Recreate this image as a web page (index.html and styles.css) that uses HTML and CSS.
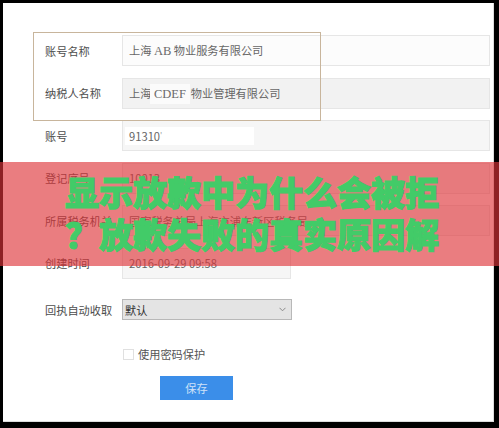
FILE: index.html
```html
<!DOCTYPE html>
<html lang="zh-CN">
<head>
<meta charset="utf-8">
<title>账号设置</title>
<link rel="stylesheet" href="styles.css">
</head>
<body>
<div class="frame">
  <div class="form">
    <div class="row">
      <div class="label">账号名称</div>
      <div class="field f-white"><span class="val">上海&nbsp;<span class="latin">AB</span>&nbsp;物业服务有限公司</span></div>
    </div>
    <div class="row">
      <div class="label">纳税人名称</div>
      <div class="field f-gray"><span class="val">上海&nbsp;<span class="latin patch">CDEF</span>&nbsp;&nbsp;物业管理有限公司</span></div>
    </div>
    <div class="row">
      <div class="label">账号</div>
      <div class="field f-light"><span class="val redact">91310<span class="tick">'</span></span></div>
    </div>
    <div class="row">
      <div class="label">登记序号</div>
      <div class="field f-light"><span class="val">10013</span></div>
    </div>
    <div class="row">
      <div class="label">所属税务机关</div>
      <div class="field f-light"><span class="val">国家税务总局上海市浦东新区税务局</span></div>
    </div>
    <div class="row">
      <div class="label">创建时间</div>
      <div class="field f-light short"><span class="val">2016-09-29 09:58</span></div>
    </div>
    <div class="row row-select">
      <div class="label">回执自动收取</div>
      <div class="select">
        <span class="sel-val">默认</span>
        <svg class="chev" width="7" height="5" viewBox="0 0 7 5"><path d="M0.5 0.8 L3.5 3.8 L6.5 0.8" fill="none" stroke="#8a8a8a" stroke-width="1"/></svg>
      </div>
    </div>
    <div class="row-check">
      <span class="checkbox"></span>
      <span class="check-text">使用密码保护</span>
    </div>
    <div class="row-btn">
      <button class="btn">保存</button>
    </div>
  </div>
  <div class="highlight"></div>
</div>
<div class="banner">
  <div class="title-line">显示放款中为什么会被拒</div>
  <div class="title-line">？放款失败的真实原因解</div>
</div>
</body>
</html>
```

FILE: styles.css
```css
html, body {
  margin: 0;
  padding: 0;
}
body {
  background: #000;
  width: 499px;
  height: 428px;
  overflow: hidden;
  position: relative;
  font-family: "Noto Sans CJK SC", "Noto Sans", sans-serif;
}
.frame {
  position: relative;
  margin: 3px 5px 0 3px;
  height: 419px;
  background: #fff;
  box-shadow: inset -1px -1px 0 #dcdcdc;
}
.form {
  display: flex;
  flex-direction: column;
  padding: 32px 4px 0 42px;
}
.row {
  display: flex;
  align-items: center;
  height: 31px;
  margin-bottom: 11.5px;
}
.label {
  width: 77px;
  flex: none;
  font-size: 11.2px;
  color: #4d4d4d;
  white-space: nowrap;
}
.field {
  flex: 1;
  height: 31px;
  box-sizing: border-box;
  border: 1px solid #e6e6e6;
  display: flex;
  align-items: center;
  padding-left: 6px;
}
.field.short {
  flex: none;
  width: 169px;
}
.f-white { background: #fcfcfc; }
.f-gray { background: #f2f2f2; }
.f-light { background: #f6f6f6; }
.val {
  font-size: 11.2px;
  color: #666;
  white-space: nowrap;
}
.latin {
  font-family: "Liberation Serif", serif;
  font-size: 12.5px;
  color: #6a6a6a;
}
.patch {
  background: #fbfbfb;
  padding: 3px 4px;
  margin: 0 -4px;
}
.redact {
  background: #fff;
  display: inline-block;
  width: 129px;
  height: 18px;
  line-height: 18px;
  margin-left: -4px;
  padding-left: 4px;
  box-sizing: border-box;
}
.tick {
  font-size: 8px;
  vertical-align: top;
  color: #999;
}
.row-select {
  height: 21px;
  margin-top: 9px;
  margin-bottom: 0;
}
.select {
  width: 170px;
  height: 21px;
  box-sizing: border-box;
  border: 1px solid #b8b8b8;
  background: #e4e4e4;
  display: flex;
  align-items: center;
  justify-content: space-between;
  padding: 0 5px 0 2px;
}
.sel-val {
  font-size: 11.2px;
  color: #2e2e2e;
}
.chev {
  display: block;
}
.row-check {
  display: flex;
  align-items: center;
  height: 16px;
  margin-top: 26px;
  padding-left: 78px;
}
.checkbox {
  width: 9px;
  height: 9px;
  border: 1px solid #e0e0e0;
  background: #fff;
  margin-right: 4px;
}
.check-text {
  font-size: 11.2px;
  color: #555;
}
.row-btn {
  margin-top: 14px;
  padding-left: 115px;
}
.btn {
  display: block;
  width: 73px;
  height: 24px;
  border: none;
  background: #3b8ee9;
  color: #cfe2f8;
  font-family: "Noto Sans CJK SC", sans-serif;
  font-size: 11.2px;
  padding: 0;
}
.highlight {
  position: absolute;
  left: 30px;
  top: 29px;
  width: 288px;
  height: 89px;
  border: 1px solid #c8b59c;
  box-sizing: border-box;
  pointer-events: none;
}
.banner {
  position: absolute;
  left: 0;
  right: 0;
  top: 162px;
  height: 104px;
  background: rgba(222, 52, 57, 0.64);
  box-sizing: border-box;
  padding: 9px 0 0 65px;
}
.title-line {
  font-family: "Noto Sans CJK SC", sans-serif;
  font-weight: 900;
  font-size: 34px;
  line-height: 42px;
  color: #42cb68;
  -webkit-text-stroke: 1.2px #42cb68;
  white-space: nowrap;
}
```
